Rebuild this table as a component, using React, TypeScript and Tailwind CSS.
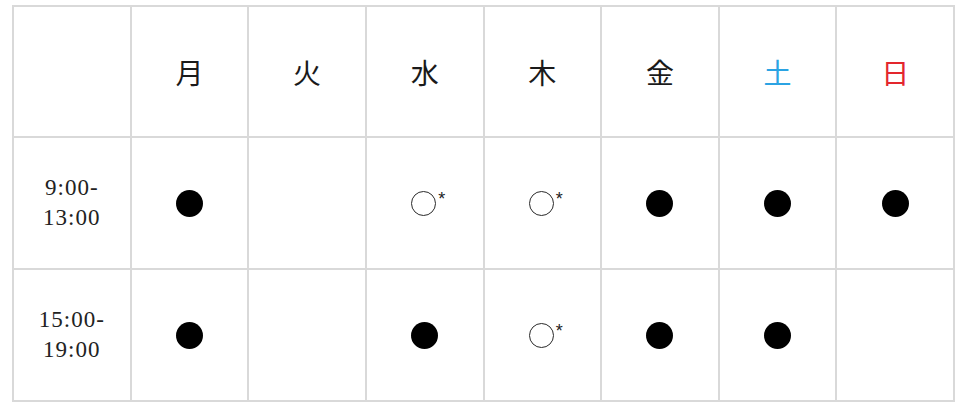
import React from "react";

type Mark = "full" | "open" | "none";

const days = [
  { label: "月", color: "text-[#1a1a1a]" },
  { label: "火", color: "text-[#1a1a1a]" },
  { label: "水", color: "text-[#1a1a1a]" },
  { label: "木", color: "text-[#1a1a1a]" },
  { label: "金", color: "text-[#1a1a1a]" },
  { label: "土", color: "text-[#2ba3e3]" },
  { label: "日", color: "text-[#e3262d]" },
];

const rows: { from: string; to: string; marks: Mark[] }[] = [
  {
    from: "9:00-",
    to: "13:00",
    marks: ["full", "none", "open", "open", "full", "full", "full"],
  },
  {
    from: "15:00-",
    to: "19:00",
    marks: ["full", "none", "full", "open", "full", "full", "none"],
  },
];

const cell =
  "flex items-center justify-center border-r-2 border-b-2 border-[#d9d9d9]";

const MarkCell = ({ mark }: { mark: Mark }) => {
  if (mark === "full") {
    return <span className="block h-[27px] w-[27px] rounded-full bg-black" />;
  }
  if (mark === "open") {
    return (
      <span className="flex items-start pl-[7px]">
        <span className="block h-[25px] w-[25px] rounded-full border-[1.5px] border-[#2a2a2a]" />
        <span className="ml-[2px] -mt-[1px] text-[18px] leading-none text-[#222] [font-family:'Liberation_Sans',sans-serif]">
          *
        </span>
      </span>
    );
  }
  return null;
};

export default function App() {
  return (
    <div className="bg-white w-[960px] h-[410px] pl-[12px] pt-[5px] [font-family:'Liberation_Serif','Noto_Sans_CJK_JP',serif]">
      <div className="grid w-[943px] grid-cols-8 grid-rows-[131px_132px_132px] border-l-2 border-t-2 border-[#d9d9d9]">
        <div className={cell} />
        {days.map((d) => (
          <div key={d.label} className={cell}>
            <span
              className={`text-[28px] leading-none [font-family:'Noto_Sans_CJK_JP',sans-serif] font-normal ${d.color}`}
            >
              {d.label}
            </span>
          </div>
        ))}

        {rows.map((row) => (
          <React.Fragment key={row.from}>
            <div className={cell}>
              <div className="text-center text-[23px] leading-[30px] tracking-[1px] text-[#222]">
                <div>{row.from}</div>
                <div>{row.to}</div>
              </div>
            </div>
            {row.marks.map((m, i) => (
              <div key={i} className={cell}>
                <MarkCell mark={m} />
              </div>
            ))}
          </React.Fragment>
        ))}
      </div>
    </div>
  );
}
